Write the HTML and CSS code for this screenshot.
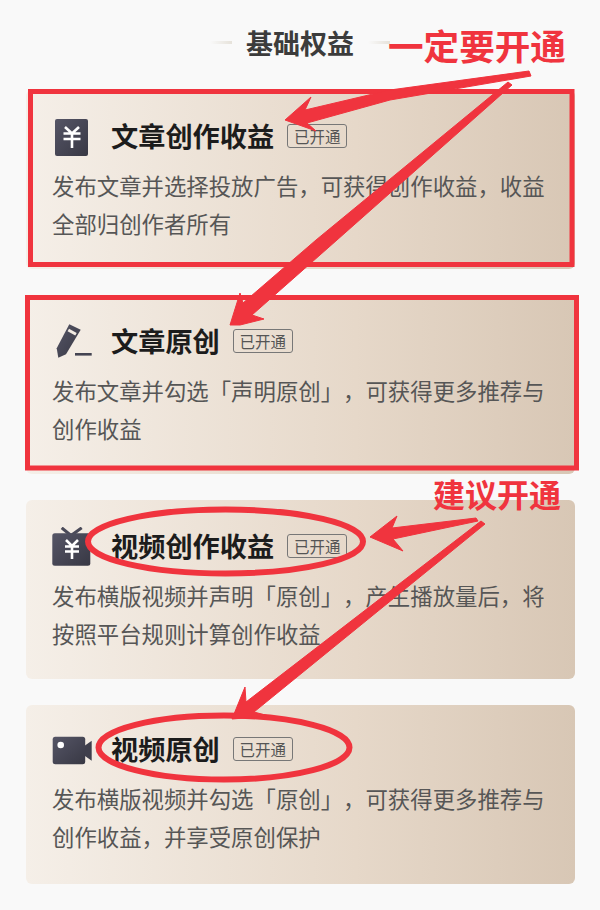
FILE: index.html
```html
<!DOCTYPE html>
<html lang="zh-CN">
<head>
    <meta charset="UTF-8">
    <meta name="viewport" content="width=device-width, initial-scale=1.0">
    <title>基础权益</title>
    <link rel="stylesheet" href="styles.css">
</head>
<body>
    <div class="page">
        <div class="section-title">
            <span class="dash"></span>
            <h2>基础权益</h2>
            <span class="dash"></span>
        </div>

        <div class="card-list">
            <div class="card">
                <div class="card-head">
                    <svg class="card-icon" viewBox="0 0 40 40">
                        <defs>
                            <linearGradient id="iconFill" x1="0" y1="0" x2="1" y2="1">
                                <stop offset="0" stop-color="#555566"/>
                                <stop offset="1" stop-color="#383844"/>
                            </linearGradient>
                        </defs>
                        <rect x="3" y="2" width="33" height="37" rx="2" fill="url(#iconFill)"/>
                        <path d="M13 10l7 6.500 7-6.500M11.500 16.500h17M11.500 22h17M20 16.500V31" fill="none" stroke="#fff" stroke-width="2.600"/>
                    </svg>
                    <h3>文章创作收益</h3>
                    <span class="badge">已开通</span>
                </div>
                <p>发布文章并选择投放广告，可获得创作收益，收益全部归创作者所有</p>
            </div>

            <div class="card">
                <div class="card-head">
                    <svg class="card-icon" viewBox="0 0 40 40">
                        <path d="M17.300 2.300L28.700 7.700 14 32.300 6.300 35.700 4.700 26.300z" fill="url(#iconFill)"/>
                        <path d="M16.300 8l7.700 4.300" fill="none" stroke="#f2ebe3" stroke-width="3"/>
                        <path d="M23 32.300h16.700" fill="none" stroke="#444452" stroke-width="2.600"/>
                    </svg>
                    <h3>文章原创</h3>
                    <span class="badge">已开通</span>
                </div>
                <p>发布文章并勾选「声明原创」，可获得更多推荐与创作收益</p>
            </div>

            <div class="card">
                <div class="card-head">
                    <svg class="card-icon" viewBox="0 0 40 40">
                        <path d="M9.700 .8L19 8.500 29.700 .8" fill="none" stroke="#4a4a59" stroke-width="3"/>
                        <rect x=".3" y="6.300" width="38" height="32.500" rx="2.500" fill="url(#iconFill)"/>
                        <path d="M14 13l6 6 6-6M13 19.500h14M13 24.500h14M20 19.500V32" fill="none" stroke="#fff" stroke-width="2.600"/>
                    </svg>
                    <h3>视频创作收益</h3>
                    <span class="badge">已开通</span>
                </div>
                <p>发布横版视频并声明「原创」，产生播放量后，将按照平台规则计算创作收益</p>
            </div>

            <div class="card">
                <div class="card-head">
                    <svg class="card-icon" viewBox="0 0 40 40">
                        <rect x=".7" y="6.700" width="32.500" height="27.500" rx="2.500" fill="url(#iconFill)"/>
                        <path d="M33 15.500l6.700-4.800v20l-6.700-4.700z" fill="#3f3f4c"/>
                        <circle cx="8.700" cy="15" r="3.300" fill="#fff"/>
                    </svg>
                    <h3>视频原创</h3>
                    <span class="badge">已开通</span>
                </div>
                <p>发布横版视频并勾选「原创」，可获得更多推荐与创作收益，并享受原创保护</p>
            </div>
        </div>

        <!-- red hand-drawn marks on top of the screenshot -->
        <svg class="marks" viewBox="0 0 600 910">
            <rect class="mark-line" x="30.500" y="91.500" width="541.500" height="173"/>
            <rect class="mark-line" x="27.500" y="297.500" width="549" height="170.500"/>
            <ellipse class="mark-line mark-round" cx="225.500" cy="541.500" rx="137.500" ry="32"/>
            <ellipse class="mark-line mark-round" cx="224" cy="747.500" rx="125.500" ry="32"/>
            <polygon class="mark-fill" points="285,120 311,97 305,110 390,90 529,71 531,76 390,100 307,123 316,131"/>
            <polygon class="mark-fill" points="230,325 240,293 243,303 316,240 508,82 512,85 337,240 252,315 264,319 240,325"/>
            <polygon class="mark-fill" points="370,537 397,516 392,528 476,518 478,521 393,539 403,551"/>
            <polygon class="mark-fill" points="232,719 245,687 246,702 481,521 485,524 254,712 269,716"/>
        </svg>
        <span class="note note-must">一定要开通</span>
        <span class="note note-suggest">建议开通</span>
    </div>
</body>
</html>
```

FILE: styles.css
```css
* {
    margin: 0;
    padding: 0;
    box-sizing: border-box;
}

body {
    font-family: "Noto Sans CJK SC", "Noto Sans", sans-serif;
    background: #f9f9f9;
    text-spacing-trim: space-all;
}

.page {
    position: relative;
    width: 600px;
    height: 910px;
    overflow: hidden;
}

.section-title {
    height: 90px;
    display: flex;
    align-items: center;
    justify-content: center;
    gap: 14px;
    padding-bottom: 5px;
}

.section-title h2 {
    font-size: 27px;
    font-weight: 700;
    color: #3c3c3c;
}

.dash {
    width: 22px;
    height: 3px;
    background: linear-gradient(90deg, #f9f9f9 0%, #e6e2da 100%);
}

.card-list {
    display: flex;
    flex-direction: column;
    gap: 26px;
    padding: 0 25px 0 26px;
}

.card {
    height: 179px;
    padding: 27px 28px 0 26px;
    border-radius: 6px;
    background: linear-gradient(90deg, #f5efe8 0%, #e6d8c9 60%, #d8c7b5 100%);
}

.card:last-child {
    padding-top: 25px;
}

.card-head {
    display: flex;
    align-items: center;
    height: 40px;
}

.card-icon {
    width: 40px;
    height: 40px;
    margin-right: 19px;
    flex-shrink: 0;
}

.card-head h3 {
    margin-top: -4px;
    font-size: 27.2px;
    font-weight: 700;
    color: #1c1c1c;
}

.badge {
    width: 60px;
    height: 24px;
    margin-top: -2px;
    margin-left: 13px;
    border: 1px solid #777;
    border-radius: 3px;
    font-size: 15.5px;
    line-height: 22px;
    text-align: center;
    color: #555;
}

.card p {
    margin-top: 9px;
    font-size: 22.4px;
    line-height: 38px;
    color: #565656;
}

.marks {
    position: absolute;
    left: 0;
    top: 0;
    width: 600px;
    height: 910px;
}

.mark-line {
    fill: none;
    stroke: #f0343e;
    stroke-width: 5;
}

.mark-round {
    stroke-width: 6;
}

.mark-fill {
    fill: #f0343e;
    stroke: #f0343e;
    stroke-width: 1;
    stroke-linejoin: round;
}

.note {
    position: absolute;
    font-weight: 700;
    color: #f0343e;
    white-space: nowrap;
}

.note-must {
    left: 388px;
    top: 19px;
    font-size: 35.6px;
    line-height: 52px;
}

.note-suggest {
    left: 433px;
    top: 470px;
    font-size: 32px;
    line-height: 46px;
}
```
